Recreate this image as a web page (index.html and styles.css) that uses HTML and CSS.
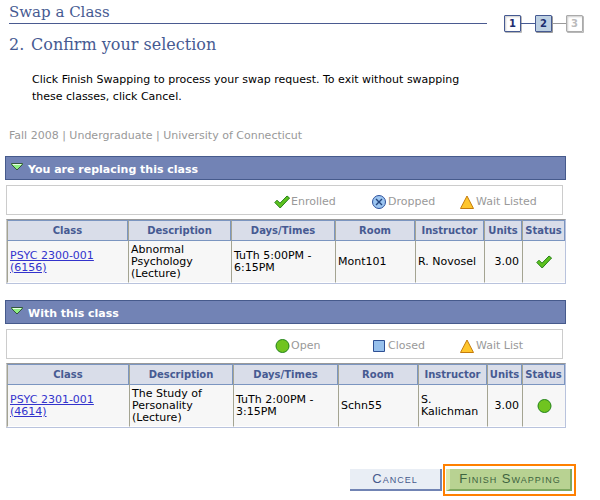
FILE: index.html
```html
<!DOCTYPE html>
<html lang="en">
<head>
<meta charset="utf-8">
<title>Swap a Class</title>
<link rel="stylesheet" href="styles.css">
</head>
<body>
<svg class="sprites" aria-hidden="true">
  <symbol id="check" viewBox="0 0 16 14"><path d="M0.8 7.5L3 5.2L6 8.2L13 1L15.6 3L6.2 13Z" fill="#5dc21e" stroke="#27801b"/></symbol>
  <symbol id="dropped" viewBox="0 0 16 14"><circle cx="8" cy="7" r="6.5" fill="#9cc5f0" stroke="#2d509b"/><path d="M5 4L11 10M11 4L5 10" stroke="#24467f" stroke-width="1.4"/></symbol>
  <symbol id="wait" viewBox="0 0 16 14"><path d="M8 1L14.5 13.5H1.5Z" fill="#ffc62c" stroke="#c47b0c"/></symbol>
  <symbol id="open" viewBox="0 0 16 14"><circle cx="8.5" cy="7" r="6.5" fill="#70c420" stroke="#238419"/></symbol>
  <symbol id="closed" viewBox="0 0 16 14"><path d="M2.5 1.5H13.5V12.5H2.5Z" fill="#97c0ec" stroke="#2e5094"/></symbol>
  <symbol id="arrow" viewBox="0 0 12 8"><path d="M0.5 0.5H11.5V1.5L6 7L0.5 1.5Z" fill="#8fef83" stroke="#35543e"/><path d="M2 1.5H10" stroke="#e9ffe4"/></symbol>
</svg>
<header class="top">
  <h1>Swap a Class</h1>
  <ol class="steps">
    <li class="step">1</li>
    <li class="link"></li>
    <li class="step current">2</li>
    <li class="link next"></li>
    <li class="step next">3</li>
  </ol>
</header>
<main>
  <h2><span class="number">2.</span>Confirm your selection</h2>
  <p class="intro">Click Finish Swapping to process your swap request. To exit without swapping these classes, click Cancel.</p>
  <p class="term">Fall 2008 | Undergraduate | University of Connecticut</p>

  <section>
    <h3><svg class="arrow"><use href="#arrow"/></svg>You are replacing this class</h3>
    <ul class="legend">
      <li><svg class="icon"><use href="#check"/></svg>Enrolled</li>
      <li><svg class="icon"><use href="#dropped"/></svg>Dropped</li>
      <li><svg class="icon"><use href="#wait"/></svg>Wait Listed</li>
    </ul>
    <table class="replaced">
      <colgroup><col class="class"><col class="description"><col class="times"><col class="room"><col class="instructor"><col class="units"><col class="status"></colgroup>
      <thead><tr><th>Class</th><th>Description</th><th>Days/Times</th><th>Room</th><th>Instructor</th><th>Units</th><th>Status</th></tr></thead>
      <tbody><tr>
        <td><a href="#">PSYC 2300-001<br>(6156)</a></td>
        <td>Abnormal<br>Psychology<br>(Lecture)</td>
        <td>TuTh 5:00PM -<br>6:15PM</td>
        <td>Mont101</td>
        <td>R. Novosel</td>
        <td class="amount">3.00</td>
        <td class="state"><svg class="icon" role="img" aria-label="Enrolled"><use href="#check"/></svg></td>
      </tr></tbody>
    </table>
  </section>

  <section>
    <h3><svg class="arrow"><use href="#arrow"/></svg>With this class</h3>
    <ul class="legend">
      <li><svg class="icon"><use href="#open"/></svg>Open</li>
      <li><svg class="icon"><use href="#closed"/></svg>Closed</li>
      <li><svg class="icon"><use href="#wait"/></svg>Wait List</li>
    </ul>
    <table class="added">
      <colgroup><col class="class"><col class="description"><col class="times"><col class="room"><col class="instructor"><col class="units"><col class="status"></colgroup>
      <thead><tr><th>Class</th><th>Description</th><th>Days/Times</th><th>Room</th><th>Instructor</th><th>Units</th><th>Status</th></tr></thead>
      <tbody><tr>
        <td><a href="#">PSYC 2301-001<br>(4614)</a></td>
        <td>The Study of<br>Personality<br>(Lecture)</td>
        <td>TuTh 2:00PM -<br>3:15PM</td>
        <td>Schn55</td>
        <td>S.<br>Kalichman</td>
        <td class="amount">3.00</td>
        <td class="state"><svg class="icon" role="img" aria-label="Open"><use href="#open"/></svg></td>
      </tr></tbody>
    </table>
  </section>

  <div class="actions">
    <button type="button" class="cancel">Cancel</button>
    <div class="highlight"><button type="button" class="finish">Finish Swapping</button></div>
  </div>
</main>
</body>
</html>
```
FILE: styles.css
```css
* { box-sizing: border-box; }
body {
  margin: 0;
  background: #fff;
  color: #000;
  font: 11px/12px "DejaVu Sans", Verdana, sans-serif;
}
h1, h2, h3, p, ol, ul { margin: 0; padding: 0; font-weight: normal; }
ol, ul { list-style: none; }
.sprites { display: none; }

.top { display: flex; align-items: flex-end; padding: 0 17px 0 9px; height: 33px; }
h1 {
  flex: 1;
  height: 24px;
  margin-bottom: 9px;
  border-bottom: 1px solid #4a5a90;
  color: #465a92;
  font: 15px/24px "DejaVu Serif", Georgia, serif;
}
.steps { display: flex; align-items: center; margin-left: 17px; padding-bottom: 1px; }
.step {
  width: 17px;
  height: 17px;
  border: 1px solid #465a92;
  border-radius: 1px;
  box-shadow: 1px 1px 0 #b8b8b8, inset 1px 1px 2px #ccc;
  color: #1c2d6e;
  font: bold 10px/15px "DejaVu Sans", Verdana, sans-serif;
  text-align: center;
}
.step.current { background: #bdd0e2; box-shadow: 1px 1px 0 #999; }
.step.next { border-color: #aaa; color: #bbb; }
.link { width: 14px; height: 1px; background: #465a92; }
.link.next { background: #999; }

main { padding: 0 34px 0 5px; }
h2 { margin-left: 4px; color: #465a92; font: 16px/24px "DejaVu Serif", Georgia, serif; }
.number { display: inline-block; width: 22px; }
.intro { max-width: 450px; margin: 14px 0 0 27px; line-height: 17px; }
.term { margin: 25px 0 14px 4px; color: #999; }

section { margin-bottom: 16px; }
h3 {
  display: flex;
  height: 24px;
  padding-left: 5px;
  gap: 5px;
  border: 1px solid #465a8c;
  background: #7283b5;
  color: #fff;
  font: bold 11px/26px "DejaVu Sans", Verdana, sans-serif;
}
.arrow { width: 12px; height: 8px; margin-top: 6px; }
.icon { display: block; width: 16px; height: 14px; }
.legend {
  display: grid;
  grid-template-columns: 97px 88px 103px;
  justify-content: end;
  align-items: center;
  height: 30px;
  margin: 5px 3px 4px 1px;
  border: 1px solid #ccc;
  color: #999;
}
.legend li { display: flex; align-items: center; gap: 1px; padding-top: 3px; }

table {
  width: calc(100% - 1px);
  margin-left: 1px;
  table-layout: fixed;
  border: 1px solid #b9c3dd;
  border-top-color: #999;
  border-left-color: #ccc;
  border-collapse: separate;
  border-spacing: 0;
}
.description { width: 103px; }
.times { width: 104px; }
.room { width: 80px; }
.instructor { width: 69px; }
.units { width: 38px; }
.status { width: 43px; }
.added .times { width: 105px; }
.added .description { width: 104px; }
.added .units { width: 35px; }
th {
  height: 21px;
  padding: 0;
  border: 1px solid #7b95c0;
  border-left: 1px solid #a4a492;
  background: #d9dde9;
  color: #465a92;
  font: bold 10px/12px "DejaVu Sans", Verdana, sans-serif;
}
td {
  height: 42px;
  padding: 2px;
  border-left: 1px solid #a4a492;
  border-bottom: 1px solid #fff;
  background: #f7f7f7;
  white-space: nowrap;
}
td a { color: #33c; }
.amount { padding-right: 3px; text-align: right; }
.state .icon { margin: auto; }

.actions { display: flex; justify-content: flex-end; align-items: center; margin: 36px -10px 0 0; gap: 1px; }
.actions button {
  height: 22px;
  padding: 0;
  border: 0 solid #7184b4;
  border-width: 0 2px 2px 0;
  border-radius: 0;
  background: #e9eef5;
  color: #465a8c;
  font: 13px/20px "Liberation Sans", Arial, sans-serif;
  font-variant: small-caps;
  letter-spacing: 1px;
}
.actions .cancel { width: 92px; }
.highlight { padding: 3px 2px 3px 1px; border: 2px solid #ff8000; }
.actions .finish {
  width: 126px;
  border-color: #7fa960;
  border-left: 4px solid #dbeab0;
  background: #b8d292;
  color: #3e6440;
}
```
